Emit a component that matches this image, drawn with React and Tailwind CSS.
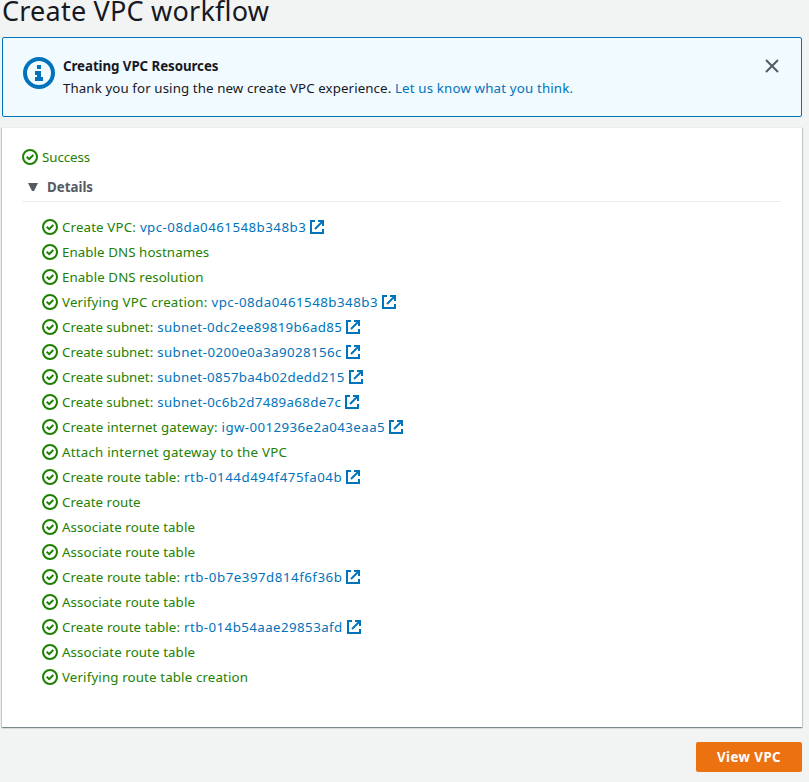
const steps = [
  { label: 'Create VPC:', gap: 'tracking-[0.14px]', link: 'vpc-08da0461548b348b3', linkGap: 'tracking-[0.47px]' },
  { label: 'Enable DNS hostnames', gap: 'tracking-[0.08px]' },
  { label: 'Enable DNS resolution', gap: 'tracking-[0.1px]' },
  { label: 'Verifying VPC creation:', gap: 'tracking-[0.18px]', link: 'vpc-08da0461548b348b3', linkGap: 'tracking-[0.48px]' },
  { label: 'Create subnet:', gap: 'tracking-normal', link: 'subnet-0dc2ee89819b6ad85', linkGap: 'tracking-[0.33px]' },
  { label: 'Create subnet:', gap: 'tracking-normal', link: 'subnet-0200e0a3a9028156c', linkGap: 'tracking-[0.39px]' },
  { label: 'Create subnet:', gap: 'tracking-normal', link: 'subnet-0857ba4b02dedd215', linkGap: 'tracking-[0.33px]' },
  { label: 'Create subnet:', gap: 'tracking-normal', link: 'subnet-0c6b2d7489a68de7c', linkGap: 'tracking-[0.34px]' },
  { label: 'Create internet gateway:', gap: 'tracking-[0.08px]', link: 'igw-0012936e2a043eaa5', linkGap: 'tracking-[0.4px]' },
  { label: 'Attach internet gateway to the VPC', gap: 'tracking-[0.22px]' },
  { label: 'Create route table:', gap: 'tracking-[0.08px]', link: 'rtb-0144d494f475fa04b', linkGap: 'tracking-[0.53px]' },
  { label: 'Create route', gap: 'tracking-[0.04px]' },
  { label: 'Associate route table', gap: 'tracking-[0.1px]' },
  { label: 'Associate route table', gap: 'tracking-[0.1px]' },
  { label: 'Create route table:', gap: 'tracking-[0.08px]', link: 'rtb-0b7e397d814f6f36b', linkGap: 'tracking-[0.51px]' },
  { label: 'Associate route table', gap: 'tracking-[0.1px]' },
  { label: 'Create route table:', gap: 'tracking-[0.08px]', link: 'rtb-014b54aae29853afd', linkGap: 'tracking-[0.43px]' },
  { label: 'Associate route table', gap: 'tracking-[0.1px]' },
  { label: 'Verifying route table creation', gap: 'tracking-[0.14px]' },
];

function CheckIcon() {
  return (
    <svg className="h-4 w-4 shrink-0" viewBox="0 0 16 16" fill="none" stroke="#1d8102" strokeWidth="2">
      <circle cx="8" cy="8" r="7" />
      <path d="M4.7 7.7 7.2 10.1 11.3 6" />
    </svg>
  );
}

function ExternalIcon() {
  return (
    <svg className="ml-1 h-3.5 w-3.5 shrink-0" viewBox="0 0 14 14" fill="none" stroke="#0073bb" strokeWidth="2">
      <path d="M5 1H1V13H13V9" />
      <path d="M8 1H13V6" />
      <path d="M13 1 5 9" />
    </svg>
  );
}

function Step({ label, gap, link, linkGap }) {
  return (
    <li className="flex h-[25px] items-center whitespace-nowrap">
      <CheckIcon />
      <span className={`ml-1 ${gap}`}>{label}</span>
      {link && (
        <>
          <a className={`ml-1 text-[#0073bb] ${linkGap}`}>{link}</a>
          <ExternalIcon />
        </>
      )}
    </li>
  );
}

export default function App() {
  return (
    <div className="h-[782px] w-[809px] overflow-hidden bg-[#f2f3f3] pl-0.5 pr-[7px] font-['Noto_Sans',sans-serif] text-[13.3px] leading-[22px] text-[#16191f]">
      <h1 className="h-[37px] whitespace-nowrap text-[27px] leading-[22px] tracking-[0.22px]">Create VPC workflow</h1>
      <section className="flex h-20 rounded-[2px] border border-[#0073bb] bg-[#f1faff] pl-5 pr-[22px]">
        <svg className="mt-[19px] h-8 w-8 shrink-0" viewBox="0 0 32 32">
          <circle cx="16" cy="16" r="14" fill="none" stroke="#0073bb" strokeWidth="4" />
          <path fill="#0073bb" d="M14 8h4v4h-4zM12 14h6v6h2v4h-8v-4h2v-2h-2z" />
        </svg>
        <div className="ml-2 mt-[17px] flex-1 whitespace-nowrap">
          <div className="font-bold tracking-[-0.06px]">Creating VPC Resources</div>
          <div className="tracking-[0.1px]">
            Thank you for using the new create VPC experience.{' '}
            <a className="tracking-[0.16px] text-[#0073bb]">Let us know what you think.</a>
          </div>
        </div>
        <svg className="mt-[21px] h-3.5 w-3.5" viewBox="0 0 14 14" fill="none" stroke="#545b64" strokeWidth="2">
          <path d="M1 1 13 13M13 1 1 13" />
        </svg>
      </section>
      <main className="mt-2.5 h-[600px] border-t border-[#eaeded] bg-white pl-5 pr-[21px] pt-[18px] text-[#1d8102] shadow-[0_1px_1px_0_rgba(0,28,36,0.3),1px_1px_1px_0_rgba(0,28,36,0.15),-1px_1px_1px_0_rgba(0,28,36,0.15)]">
        <div className="flex h-[22px] items-center gap-1">
          <CheckIcon />
          <span className="tracking-[-0.06px]">Success</span>
        </div>
        <div className="mt-2 flex h-[26px] border-b border-[#eaeded] pl-1.5 font-bold text-[#545b64]">
          <svg className="mt-[7px] h-2 w-2.5" viewBox="0 0 10 8" fill="#545b64">
            <path d="M0 0H10L6 8H4z" />
          </svg>
          <span className="ml-[9px]">Details</span>
        </div>
        <ul className="mt-3 pl-5">
          {steps.map((step, i) => (
            <Step key={i} {...step} />
          ))}
        </ul>
      </main>
      <div className="mt-[15px] flex justify-end">
        <button className="h-[30px] w-[106px] rounded-[2px] bg-[#ec7211] font-bold tracking-[0.45px] text-white">View VPC</button>
      </div>
    </div>
  );
}
